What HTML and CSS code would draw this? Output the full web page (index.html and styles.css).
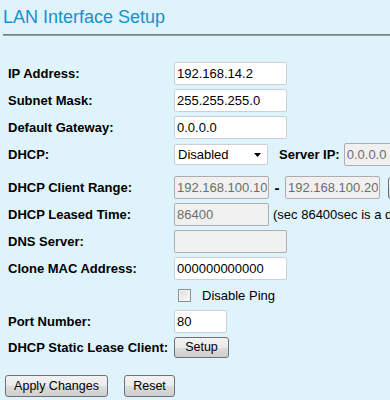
FILE: index.html
```html
<!DOCTYPE html>
<html lang="en">
<head>
  <meta charset="UTF-8">
  <title>LAN Interface Setup</title>
  <link rel="stylesheet" href="styles.css">
</head>
<body>

<h1 class="title">LAN Interface Setup</h1>
<div class="rule"></div>

<form class="setup">
  <div class="row">
    <label class="label">IP Address:</label>
    <input type="text" class="field wide" value="192.168.14.2">
  </div>
  <div class="row">
    <label class="label">Subnet Mask:</label>
    <input type="text" class="field wide" value="255.255.255.0">
  </div>
  <div class="row">
    <label class="label">Default Gateway:</label>
    <input type="text" class="field wide" value="0.0.0.0">
  </div>
  <div class="row">
    <label class="label">DHCP:</label>
    <span class="select-wrap">
      <select class="select">
        <option>Disabled</option>
        <option>Client</option>
        <option>Server</option>
      </select>
      <svg class="arrow" width="7" height="4" viewBox="0 0 7 4"><path d="M0 0h7L3.5 4z" fill="#000"/></svg>
    </span>
    <span class="inline-label">Server IP:</span>
    <input type="text" class="field wide" value="0.0.0.0" disabled>
  </div>
  <div class="row gap-top">
    <label class="label">DHCP Client Range:</label>
    <input type="text" class="field mid" value="192.168.100.10" disabled>
    <span class="dash">-</span>
    <input type="text" class="field mid" value="192.168.100.20" disabled>
    <button type="button" class="btn show">Show Client</button>
  </div>
  <div class="row">
    <label class="label">DHCP Leased Time:</label>
    <input type="text" class="field mid" value="86400" disabled>
    <span class="note">(sec 86400sec is a day)</span>
  </div>
  <div class="row">
    <label class="label">DNS Server:</label>
    <input type="text" class="field wide" value="" disabled>
  </div>
  <div class="row">
    <label class="label">Clone MAC Address:</label>
    <input type="text" class="field wide" value="000000000000">
  </div>
  <div class="row short">
    <span class="label"></span>
    <input type="checkbox" class="check" id="ping">
    <label class="check-text" for="ping">Disable Ping</label>
  </div>
  <div class="row short">
    <label class="label">Port Number:</label>
    <input type="text" class="field port" value="80">
  </div>
  <div class="row short">
    <label class="label">DHCP Static Lease Client:</label>
    <button type="button" class="btn setup-btn">Setup</button>
  </div>

  <div class="actions">
    <button type="button" class="btn apply">Apply Changes</button>
    <button type="button" class="btn reset">Reset</button>
  </div>
</form>

</body>
</html>
```

FILE: styles.css
```css
body {
  margin: 0;
  background-color: #dff3fc;
  font-family: "Liberation Sans", Arial, sans-serif;
  font-size: 13px;
  color: #000;
  overflow: hidden;
}

.title {
  margin: 6px 0 0 3px;
  font-size: 18px;
  font-weight: normal;
  line-height: 22px;
  color: #1b8fca;
}

.rule {
  margin: 6px 0 0 3px;
  border-top: 1px solid #7f7f7f;
  border-bottom: 1px solid #9c9c9c;
}

.setup {
  margin-top: 24px;
}

.row {
  display: flex;
  align-items: center;
  height: 27px;
  white-space: nowrap;
}

.row > * {
  flex-shrink: 0;
}

.row.short {
  height: 26px;
}

.row.gap-top {
  margin-top: 6px;
}

.label {
  width: 166px;
  padding-left: 8px;
  font-weight: bold;
}

.field {
  box-sizing: border-box;
  height: 23px;
  margin: 0;
  padding: 1px 2px;
  border: 1px solid #c9d0d6;
  border-radius: 2px;
  background: #fff;
  font-family: "Liberation Sans", Arial, sans-serif;
  font-size: 13px;
  color: #000;
}

.field:disabled {
  background: #f0f0f0;
  border-color: #adadad;
  color: #6d6d6d;
}

.wide {
  width: 113px;
}

.mid {
  width: 95px;
  padding: 1px 1px 1px 2px;
}

.port {
  width: 53px;
}

.select-wrap {
  position: relative;
}

.select {
  display: block;
  box-sizing: border-box;
  width: 94px;
  height: 21px;
  margin: 0;
  padding: 0 3px;
  border: 1px solid #c9d0d6;
  border-radius: 2px;
  background: #fff;
  font-family: "Liberation Sans", Arial, sans-serif;
  font-size: 13px;
  color: #000;
  appearance: none;
}

.arrow {
  position: absolute;
  right: 7px;
  top: 9px;
}

.inline-label {
  margin: 0 4px 0 11px;
  font-weight: bold;
}

.dash {
  width: 16px;
  text-align: center;
  font-weight: bold;
  font-size: 15px;
}

.note {
  margin-left: 4px;
}

.check {
  box-sizing: border-box;
  width: 13px;
  height: 13px;
  margin: 0 0 0 4px;
  border: 1px solid #8e8f8f;
  border-radius: 0;
  background: linear-gradient(135deg, #dcdcdc, #fbfbfb);
  box-shadow: inset 0 0 0 1px #f4f4f4;
  appearance: none;
}

.check-text {
  margin-left: 11px;
}

.btn {
  box-sizing: border-box;
  height: 22px;
  margin: 0;
  padding: 0;
  border: 1px solid #707070;
  border-radius: 3px;
  background: linear-gradient(#f2f2f2 0%, #ebebeb 50%, #dddddd 50%, #cfcfcf 100%);
  font-family: "Liberation Sans", Arial, sans-serif;
  font-size: 12.5px;
  color: #000;
  cursor: pointer;
}

.setup-btn {
  width: 55px;
  height: 21px;
}

.show {
  margin-left: 8px;
  width: 80px;
}

.actions {
  display: flex;
  gap: 16px;
  margin-top: 15px;
  padding-left: 5px;
}

.apply {
  width: 103px;
}

.reset {
  width: 51px;
}
```
